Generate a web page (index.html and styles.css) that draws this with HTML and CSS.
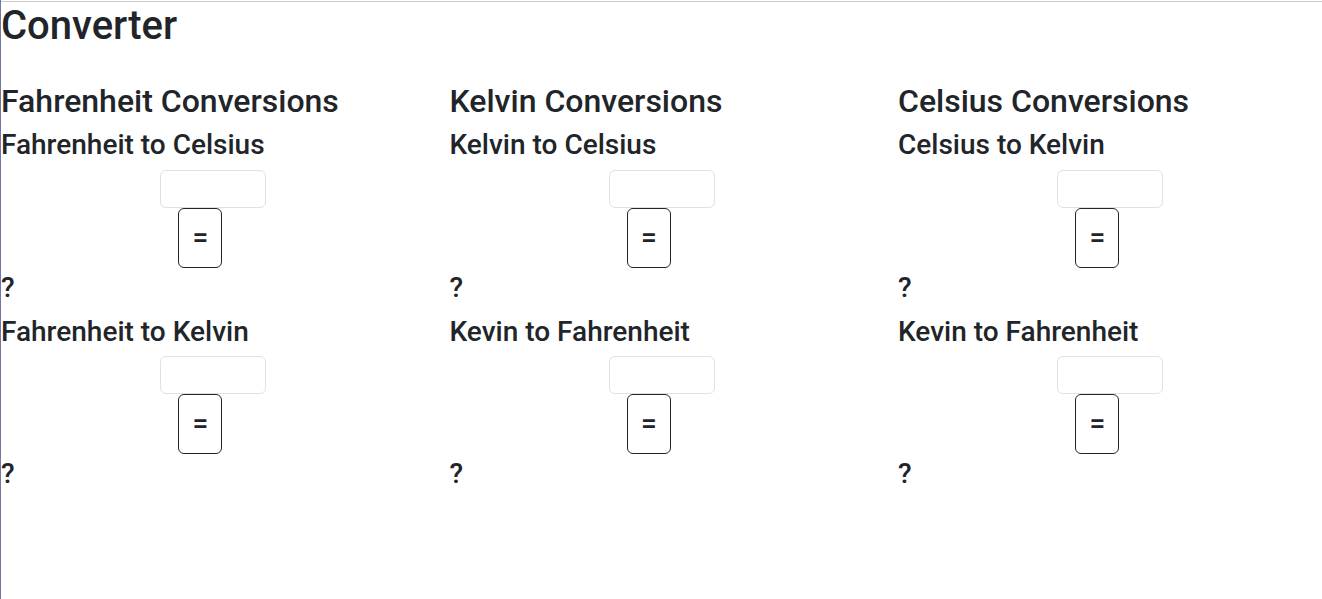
FILE: index.html
```html
<!DOCTYPE html>
<html lang="en">
<head>
<meta charset="utf-8">
<title>Converter</title>
<link rel="stylesheet" href="styles.css">
</head>
<body>
<div class="topline"></div>
<main class="page">
  <h1 class="title">Converter</h1>
  <div class="row">
    <section class="col">
      <h2 class="group-title">Fahrenheit Conversions</h2>
      <div class="conv">
        <h3 class="conv-title">Fahrenheit to Celsius</h3>
        <div class="io"><input class="field" type="text"><button class="eq">=</button></div>
        <p class="result">?</p>
      </div>
      <div class="conv">
        <h3 class="conv-title">Fahrenheit to Kelvin</h3>
        <div class="io"><input class="field" type="text"><button class="eq">=</button></div>
        <p class="result">?</p>
      </div>
    </section>
    <section class="col">
      <h2 class="group-title">Kelvin Conversions</h2>
      <div class="conv">
        <h3 class="conv-title">Kelvin to Celsius</h3>
        <div class="io"><input class="field" type="text"><button class="eq">=</button></div>
        <p class="result">?</p>
      </div>
      <div class="conv">
        <h3 class="conv-title">Kevin to Fahrenheit</h3>
        <div class="io"><input class="field" type="text"><button class="eq">=</button></div>
        <p class="result">?</p>
      </div>
    </section>
    <section class="col">
      <h2 class="group-title">Celsius Conversions</h2>
      <div class="conv">
        <h3 class="conv-title">Celsius to Kelvin</h3>
        <div class="io"><input class="field" type="text"><button class="eq">=</button></div>
        <p class="result">?</p>
      </div>
      <div class="conv">
        <h3 class="conv-title">Kevin to Fahrenheit</h3>
        <div class="io"><input class="field" type="text"><button class="eq">=</button></div>
        <p class="result">?</p>
      </div>
    </section>
  </div>
</main>
</body>
</html>
```

FILE: styles.css
```css
* { box-sizing: border-box; }

html, body {
  margin: 0;
  padding: 0;
  overflow-x: hidden;
}

body {
  min-height: 100vh;
  border-left: 1px solid #7476a6;
  background: #fff;
  color: #212529;
  font-family: Roboto, "Liberation Sans", Arial, sans-serif;
  font-size: 16px;
  line-height: 1.5;
}

.topline {
  margin-top: 1px;
  height: 1px;
  background: #cccccc;
}

.page {
  width: 100%;
}

.title {
  margin: 0 0 32px;
  font-size: 40px;
  font-weight: 500;
  line-height: 1.2;
}

.row {
  display: flex;
  margin: 0 -12.5px;
}

.col {
  flex: 0 0 448.5px;
  max-width: 448.5px;
  padding: 0 12.5px;
}

.group-title {
  margin: 0 0 8px;
  font-size: 32px;
  font-weight: 500;
  line-height: 1.2;
}

.conv-title {
  margin: 0 0 8px;
  font-size: 28px;
  font-weight: 500;
  line-height: 1.2;
}

.io {
  display: flex;
  flex-direction: column;
  align-items: center;
  padding-left: 1px;
}

.field {
  display: block;
  width: 106px;
  height: 38px;
  padding: 6px 12px;
  border: 1px solid #dee2e6;
  border-radius: 6px;
  background: #fff;
  font: inherit;
  color: #212529;
}

.eq {
  display: flex;
  align-items: center;
  justify-content: center;
  width: 44px;
  height: 60px;
  margin-right: 26px;
  padding: 0;
  border: 1px solid #212529;
  border-radius: 6px;
  background: #fff;
  color: #212529;
  font-family: Roboto, "Liberation Sans", Arial, sans-serif;
  font-size: 28px;
  font-weight: 500;
  line-height: 1;
}

.result {
  margin: 3px 0 10px;
  font-size: 28px;
  font-weight: 500;
  line-height: 1.2;
}
```
